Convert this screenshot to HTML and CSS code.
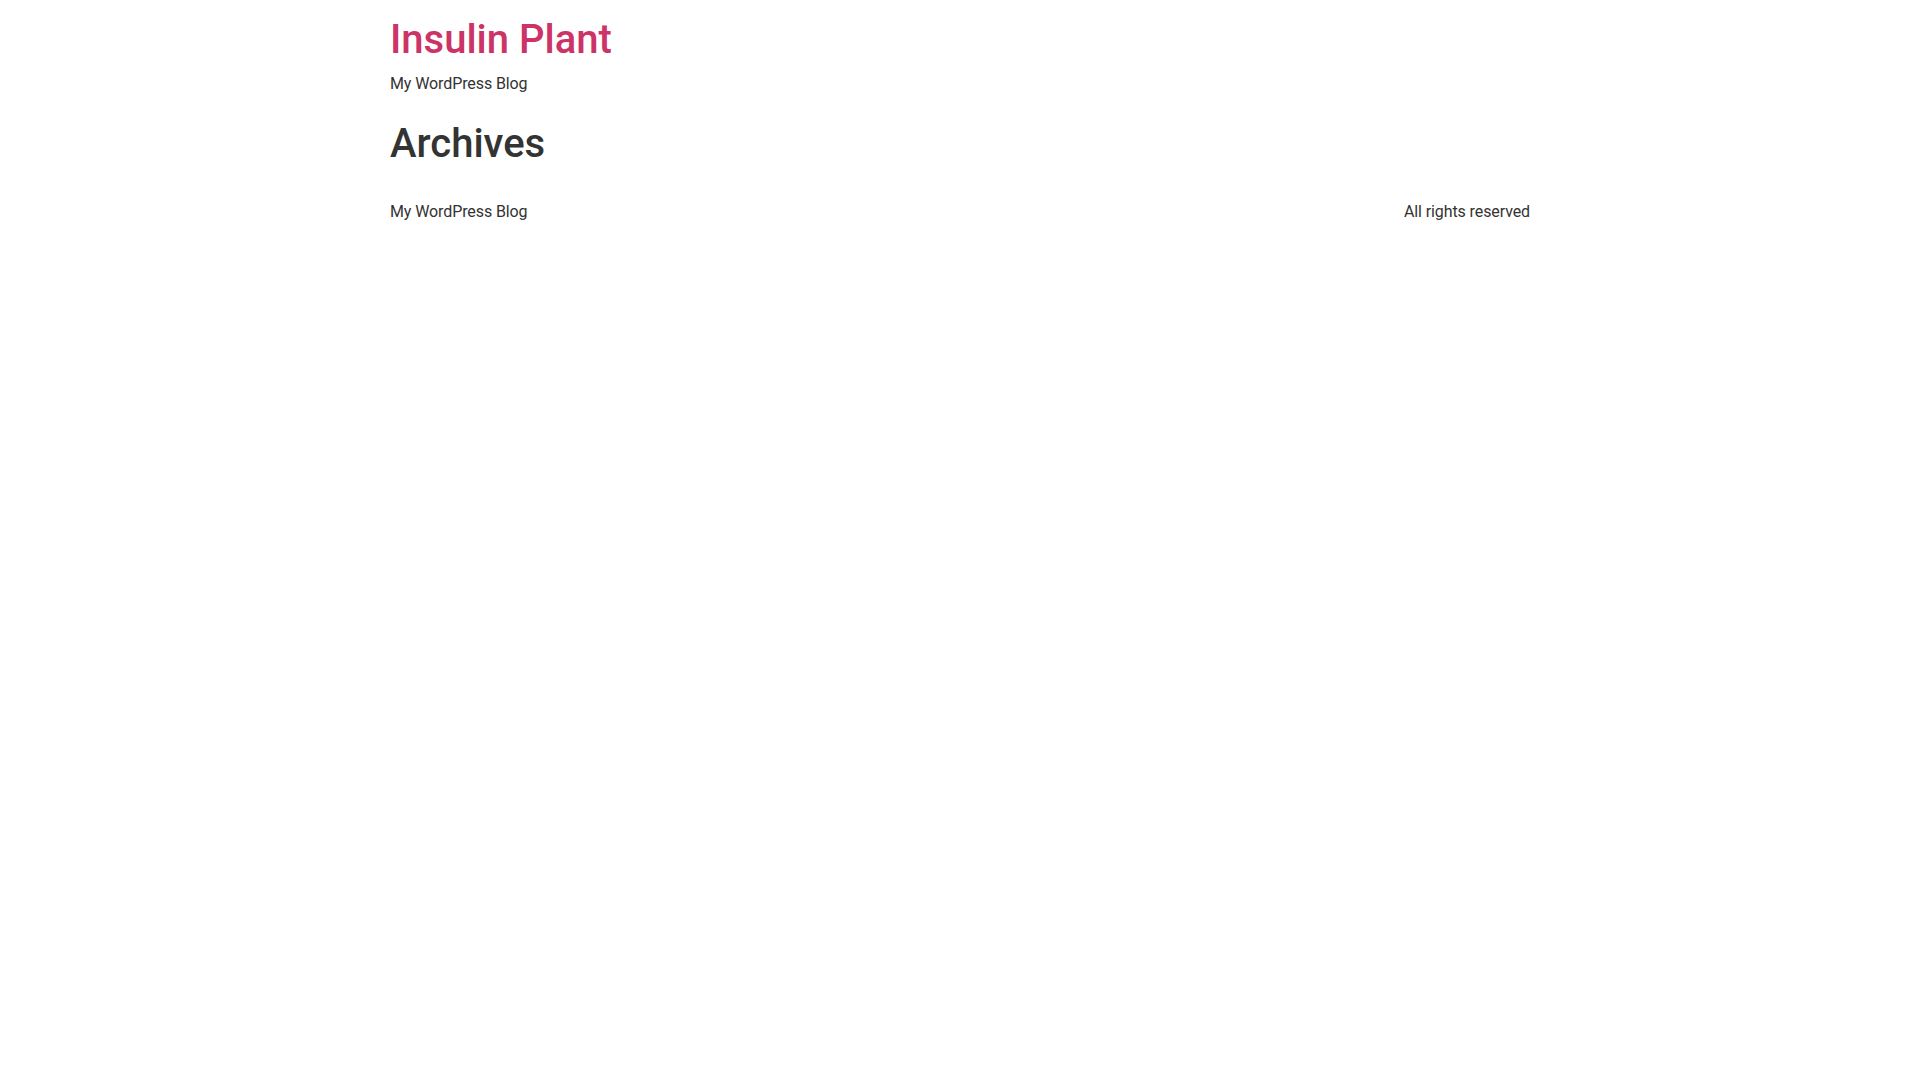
FILE: index.html
```html
<!DOCTYPE html>
<html lang="en">
<head>
<meta charset="utf-8">
<title>Archives – Insulin Plant</title>
<link rel="stylesheet" href="styles.css">
</head>
<body>
<header class="site-header">
  <div class="site-branding">
    <h1 class="site-title"><a href="#" class="site-link">Insulin Plant</a></h1>
    <p class="site-description">My WordPress Blog</p>
  </div>
</header>
<main class="site-main">
  <div class="page-header">
    <h1 class="entry-title">Archives</h1>
  </div>
  <div class="page-content"></div>
</main>
<footer class="site-footer">
  <div class="footer-inner">
    <p class="site-description">My WordPress Blog</p>
    <p class="copyright">All rights reserved</p>
  </div>
</footer>
</body>
</html>
```
FILE: styles.css
```css
html {
  line-height: 1.15;
}

body {
  margin: 0;
  background: #fff;
  color: #333;
  font-family: Roboto, "Liberation Sans", sans-serif;
  font-size: 16px;
  line-height: 1.5;
}

p {
  margin: 0;
}

h1 {
  margin: 8px 0 16px;
  font-size: 40px;
  font-weight: 500;
  line-height: 1.2;
  color: inherit;
}

a {
  color: #c36;
  text-decoration: none;
}

.site-header,
.site-main,
.site-footer {
  max-width: 1140px;
  margin: 0 auto;
}

.site-header {
  display: flex;
  justify-content: space-between;
  padding: 16px 0;
}

.site-header .site-title {
  margin: 0 0 8px;
}

.site-description,
.copyright {
  letter-spacing: -0.1px;
}

.site-footer {
  padding: 16px 0;
}

.footer-inner {
  display: flex;
  justify-content: space-between;
  align-items: center;
}
```
